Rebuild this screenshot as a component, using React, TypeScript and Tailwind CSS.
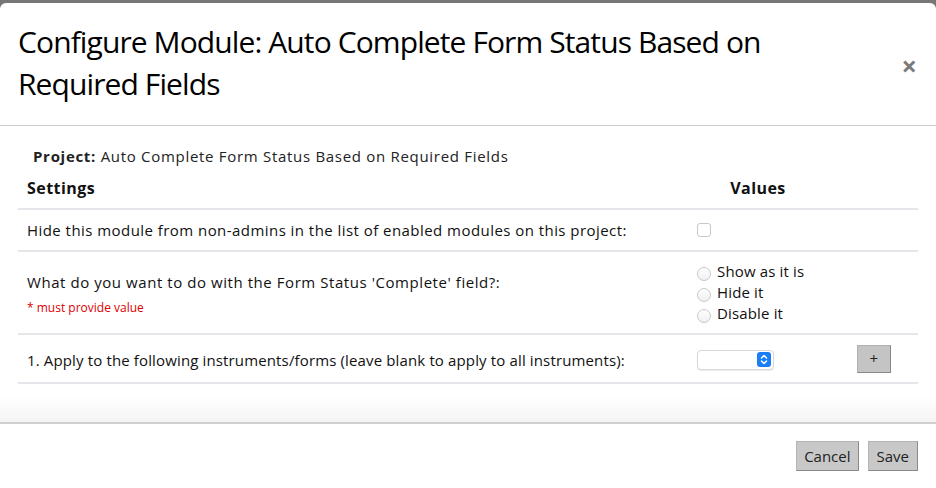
import React from "react";

function Radio({ label }: { label: string }) {
  return (
    <div className="flex items-center h-[21px]">
      <span className="w-[14px] h-[14px] rounded-full border border-[#c8c8c8] bg-gradient-to-b from-white to-[#f0f0f0] mt-[5px]" />
      <span className="ml-[6px] text-[15px] text-[#111] tracking-[0.15px]">{label}</span>
    </div>
  );
}

export default function App() {
  return (
    <div className="w-[936px] h-[488px] bg-[#767676] pt-[3px] overflow-hidden" style={{ fontFamily: '"Open Sans", "Liberation Sans", sans-serif' }}>
      <div className="bg-white rounded-t-[6px] h-[485px] flex flex-col">
        {/* Header */}
        <div className="h-[123px] flex items-center justify-between pl-[18px] pr-[19px] border-b border-[#cfcfcf]">
          <h1 className="text-[30px] leading-[42px] text-black font-normal w-[800px] -mt-[3px] tracking-[-0.9px]">
            Configure Module: Auto Complete Form Status Based on Required Fields
          </h1>
          <span className="text-[#7a7a7a] text-[27px] font-bold leading-none mt-[2px]">×</span>
        </div>
        {/* Body */}
        <div className="flex-1 bg-gradient-to-b from-[#f7f7f7] via-white via-[12px] to-white">
          <div className="h-full bg-gradient-to-t from-[#f4f4f4] via-white via-[26px] to-white">
            <div className="px-[18px] pt-[19px] tracking-[0.45px]">
              <div className="pl-[15px] text-[15px] text-[#222] h-[22px] leading-[22px] tracking-[0.7px]">
                <span className="font-bold">Project:</span> Auto Complete Form Status Based on Required Fields
              </div>
              <div className="grid grid-cols-[670px_140px_90px] text-[15px] text-[#111]">
                <div className="font-bold pl-[9px] h-[43px] flex items-center border-b-2 border-[#e4e6ea] text-[16px]">Settings</div>
                <div className="font-bold text-center h-[43px] flex items-center justify-center border-b-2 border-[#e4e6ea] text-[16px]">Values</div>
                <div className="h-[43px] border-b-2 border-[#e4e6ea]" />

                <div className="pl-[9px] h-[42px] flex items-center border-b-2 border-[#e4e6ea]">
                  Hide this module from non-admins in the list of enabled modules on this project:
                </div>
                <div className="pl-[9px] h-[42px] flex items-center border-b-2 border-[#e4e6ea]">
                  <span className="w-[14px] h-[14px] rounded-[3px] border border-[#c8c8c8] bg-white" />
                </div>
                <div className="h-[42px] border-b-2 border-[#e4e6ea]" />

                <div className="pl-[9px] h-[83px] flex flex-col justify-start pt-[19px] border-b-2 border-[#e4e6ea]">
                  <div className="leading-[22px] tracking-[0.56px]">What do you want to do with the Form Status 'Complete' field?:</div>
                  <div className="text-[12px] text-[#e00000] leading-[18px] mt-[6px] tracking-normal">* must provide value</div>
                </div>
                <div className="pl-[9px] h-[83px] flex flex-col pt-[9px] border-b-2 border-[#e4e6ea] whitespace-nowrap">
                  <Radio label="Show as it is" />
                  <Radio label="Hide it" />
                  <Radio label="Disable it" />
                </div>
                <div className="h-[83px] border-b-2 border-[#e4e6ea]" />

                <div className="pl-[9px] h-[49px] flex items-center pt-[3px] border-b-2 border-[#e4e6ea] tracking-[0.14px]">
                  1. Apply to the following instruments/forms (leave blank to apply to all instruments):
                </div>
                <div className="pl-[9px] h-[49px] flex items-center pt-[2px] border-b-2 border-[#e4e6ea]">
                  <div className="w-[77px] h-[20px] rounded-[4px] border border-[#d8d8d8] bg-white flex items-center justify-end pr-[2px] shadow-[0_1px_1px_rgba(0,0,0,0.08)]">
                    <span className="w-[14px] h-[15px] rounded-[3px] bg-[#1a7ef7] flex items-center justify-center">
                      <svg width="8" height="11" viewBox="0 0 8 11" fill="none" stroke="white" strokeWidth="1.5" strokeLinecap="round" strokeLinejoin="round">
                        <path d="M1.5 4 L4 1.5 L6.5 4" />
                        <path d="M1.5 7 L4 9.5 L6.5 7" />
                      </svg>
                    </span>
                  </div>
                </div>
                <div className="h-[49px] flex items-center justify-center border-b-2 border-[#e4e6ea] pl-[2px]">
                  <button className="w-[34px] h-[28px] bg-[#c4c4c4] border border-[#b0b0b0] border-b-[#888] border-r-[#888] text-[15px] text-[#222] leading-none flex items-center justify-center">+</button>
                </div>
              </div>
            </div>
          </div>
        </div>
        {/* Footer */}
        <div className="h-[66px] border-t-2 border-[#d0d0d0] flex items-start justify-end gap-[9px] pr-[18px] pt-[17px]">
          <button className="h-[30px] px-[7px] bg-[#c8c8c8] border border-[#b4b4b4] border-b-[#8a8a8a] border-r-[#8a8a8a] text-[15px] text-[#222]">Cancel</button>
          <button className="h-[30px] px-[8px] bg-[#c8c8c8] border border-[#b4b4b4] border-b-[#8a8a8a] border-r-[#8a8a8a] text-[15px] text-[#222]">Save</button>
        </div>
      </div>
    </div>
  );
}
